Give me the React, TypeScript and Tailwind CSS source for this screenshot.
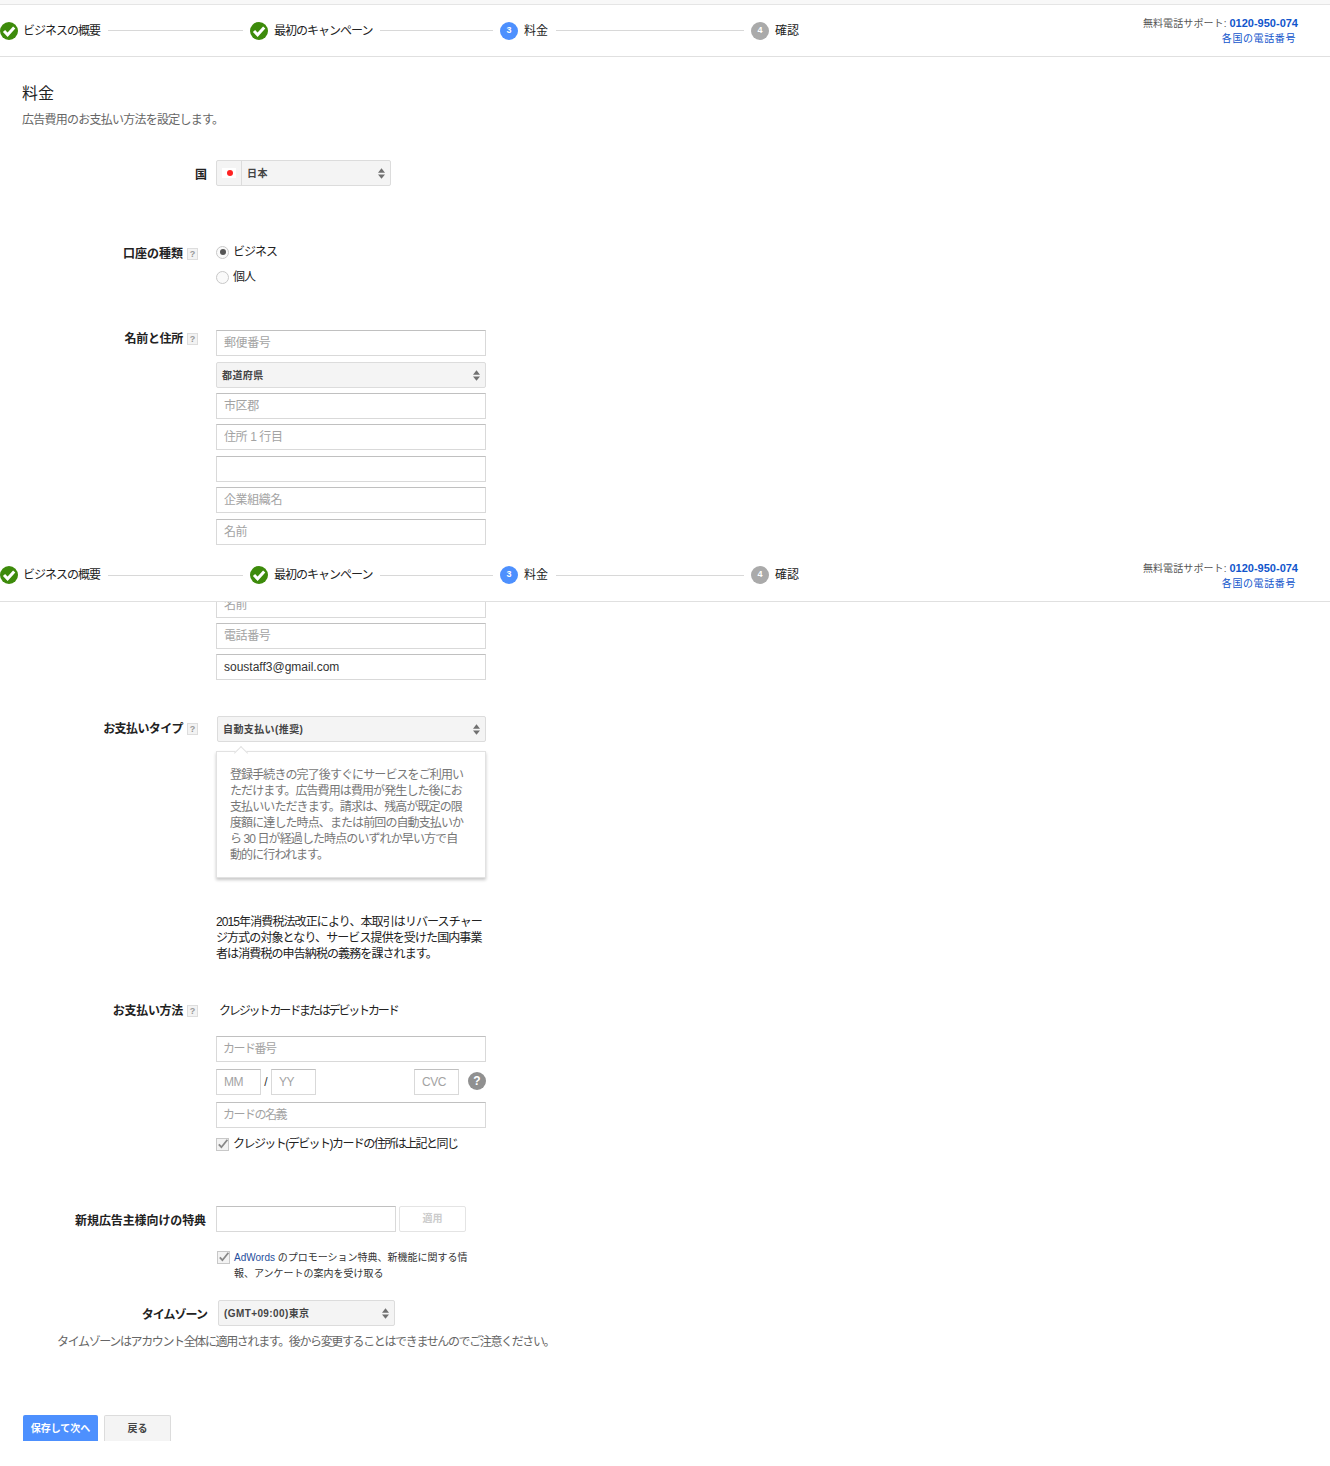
import React from 'react';

const inputClass =
  'block h-[26px] box-border border border-[#d9d9d9] border-t-[#c0c0c0] bg-white px-[7px] text-[12px] text-[#333] placeholder:text-[#a3a3a3] placeholder:tracking-[-0.4px] outline-none';

const StepCheck = () => (
  <svg width="18" height="18" viewBox="0 0 18 18" className="shrink-0">
    <circle cx="9" cy="9" r="9" fill="#3d8b0b" />
    <path d="M4 9 L7.6 12.8 L14.2 5.4" fill="none" stroke="#fff" strokeWidth="3" />
  </svg>
);

const StepNumber = ({ n, color }: { n: number; color: string }) => (
  <div className={`flex h-[18px] w-[18px] shrink-0 items-center justify-center rounded-full text-[9px] font-bold text-white ${color}`}>
    {n}
  </div>
);

const SelectArrows = () => (
  <svg width="7" height="11" viewBox="0 0 8 12" className="shrink-0">
    <path d="M4 0 L8 5 L0 5 Z M0 7 L8 7 L4 12 Z" fill="#707070" />
  </svg>
);

const Help = () => (
  <span className="ml-[4px] flex h-[12px] w-[11px] shrink-0 items-center justify-center border border-[#ddd] bg-[#f3f3f3] text-[9px] font-bold leading-none tracking-normal text-[#999]">
    ?
  </span>
);

const Label = ({ text, help, className }: { text: string; help?: boolean; className: string }) => (
  <div className={`flex w-[216px] shrink-0 items-center justify-end text-[12px] font-bold text-[#222] ${help ? 'pr-[18px]' : 'pr-[9px]'} ${className}`}>
    {text}
    {help && <Help />}
  </div>
);

const Select = ({ text, className, left }: { text: string; className: string; left?: React.ReactNode }) => (
  <div className={`flex h-[26px] box-border items-center rounded-[2px] border border-[#dcdcdc] bg-[#f4f4f4] pr-[5px] text-[10px] font-bold text-[#444] ${className}`}>
    {left}
    <span className="flex-1 pl-[5px] tracking-[0.4px]">{text}</span>
    <SelectArrows />
  </div>
);

const Checkbox = () => (
  <svg width="13" height="13" viewBox="0 0 13 13" className="shrink-0">
    <rect x="0.5" y="0.5" width="12" height="12" fill="#f3f3f3" stroke="#c8c8c8" />
    <path d="M2.8 6.4 L5.4 9.2 L11.4 1.8" fill="none" stroke="#888" strokeWidth="1.8" />
  </svg>
);

const Radio = ({ checked }: { checked?: boolean }) => (
  <span className="flex h-[13px] w-[13px] shrink-0 items-center justify-center rounded-full border border-[#c8c8c8] bg-[#fafafa]">
    {checked && <span className="h-[6px] w-[6px] rounded-full bg-[#555]" />}
  </span>
);

const Header = ({ topLine }: { topLine?: boolean }) => (
  <div className={`flex h-[53px] box-border items-center border-b border-[#e0e0e0] ${topLine ? 'border-t border-t-[#e5e5e5]' : ''}`}>
    <div className="flex w-[250px] items-center">
      <StepCheck />
      <span className="ml-[5px] text-[12px] tracking-[-1px] text-[#222]">ビジネスの概要</span>
      <div className="ml-[8px] mr-[7px] h-px flex-1 bg-[#d8d8d8]" />
    </div>
    <div className="flex w-[250px] items-center">
      <StepCheck />
      <span className="ml-[6px] text-[12px] tracking-[-1px] text-[#222]">最初のキャンペーン</span>
      <div className="ml-[8px] mr-[7px] h-px flex-1 bg-[#d8d8d8]" />
    </div>
    <div className="flex w-[251px] items-center">
      <StepNumber n={3} color="bg-[#4d90fe]" />
      <span className="ml-[6px] text-[12px] text-[#222]">料金</span>
      <div className="ml-[8px] mr-[7px] h-px flex-1 bg-[#d8d8d8]" />
    </div>
    <div className="flex items-center">
      <StepNumber n={4} color="bg-[#aaaaaa]" />
      <span className="ml-[6px] text-[12px] text-[#222]">確認</span>
    </div>
    <div className="ml-auto mr-[32px] text-right leading-[15px]">
      <div className="mt-px text-[10px] tracking-[0.1px] text-[#555]">
        無料電話サポート: <span className="text-[11px] font-bold tracking-normal text-[#1155cc]">0120-950-074</span>
      </div>
      <div className="mr-[2px] text-[10px] tracking-[0.6px] text-[#1155cc]">各国の電話番号</div>
    </div>
  </div>
);

export default function App() {
  return (
    <div className="relative h-[1466px] w-[1330px] overflow-hidden bg-white font-['Liberation_Sans','Noto_Sans_CJK_JP',sans-serif]">
      <div className="h-[4px] bg-[#f8f8f8]" />
      <Header topLine />

      <div className="pl-[22px] pt-[25px]">
        <h1 className="text-[16px] font-normal leading-[24px] text-[#222]">料金</h1>
        <p className="mt-[6px] text-[12px] leading-[16px] tracking-[-0.75px] text-[#666]">広告費用のお支払い方法を設定します。</p>
      </div>

      <div className="mt-[32px] flex h-[26px] items-start">
        <Label text="国" className="h-[30px]" />
        <Select
          text="日本"
          className="w-[175px]"
          left={
            <div className="flex h-full w-[25px] items-center justify-center border-r border-[#dcdcdc]">
              <div className="flex h-[10px] w-[14px] items-center justify-center bg-white">
                <div className="ml-px h-[6px] w-[6px] rounded-full bg-[#f22]" />
              </div>
            </div>
          }
        />
      </div>

      <div className="mt-[56px] flex items-start">
        <Label text="口座の種類" help className="h-[24px]" />
        <div className="flex flex-col gap-[5px] text-[12px] tracking-[-1px] text-[#222]">
          <label className="flex h-[20px] items-center gap-[4px]"><Radio checked />ビジネス</label>
          <label className="flex h-[20px] items-center gap-[4px]"><Radio />個人</label>
        </div>
      </div>

      <div className="mt-[43px] flex items-start">
        <Label text="名前と住所" help className="h-[18px] tracking-[-0.3px]" />
        <div>
          <input className={`${inputClass} w-[270px]`} placeholder="郵便番号" />
          <Select text="都道府県" className="mt-[6px] w-[270px]" />
          <input className={`${inputClass} mt-[5px] w-[270px]`} placeholder="市区郡" />
          <input className={`${inputClass} mt-[5px] w-[270px]`} placeholder="住所 1 行目" />
          <input className={`${inputClass} mt-[6px] w-[270px]`} />
          <input className={`${inputClass} mt-[5px] w-[270px]`} placeholder="企業組織名" />
          <input className={`${inputClass} mt-[6px] w-[270px]`} placeholder="名前" />
        </div>
      </div>

      <div className="mt-[4px]">
        <Header />
      </div>

      <div className="ml-[216px]">
        <div className="h-[16px] overflow-hidden">
          <input className={`${inputClass} -mt-[10px] w-[270px]`} placeholder="名前" />
        </div>
        <input className={`${inputClass} mt-[5px] w-[270px]`} placeholder="電話番号" />
        <input className={`${inputClass} mt-[5px] w-[270px]`} defaultValue="soustaff3@gmail.com" />
      </div>

      <div className="mt-[36px] flex items-start">
        <Label text="お支払いタイプ" help className="h-[26px] tracking-[-0.6px]" />
        <Select text="自動支払い(推奨)" className="ml-px w-[269px]" />
      </div>

      <div className="relative ml-[216px] mt-[9px] h-[127px] w-[270px] border border-[#e2e2e2] bg-white px-[13px] pt-[15px] text-[12px] leading-[16px] tracking-[-0.9px] text-[#777] shadow-[0_2px_3px_rgba(0,0,0,0.22)]">
        <div className="absolute -top-[4px] left-[19px] h-[10px] w-[10px] rotate-45 border-l border-t border-[#e2e2e2] bg-white" />
        <p className="relative">
          登録手続きの完了後すぐにサービスをご利用い<br />
          ただけます。広告費用は費用が発生した後にお<br />
          支払いいただきます。請求は、残高が既定の限<br />
          度額に達した時点、または前回の自動支払いか<br />
          ら 30 日が経過した時点のいずれか早い方で自<br />
          動的に行われます。
        </p>
      </div>

      <p className="ml-[216px] mt-[36px] text-[12px] leading-[16px] tracking-[-0.9px] text-[#222]">
        2015年消費税法改正により、本取引はリバースチャー<br />
        ジ方式の対象となり、サービス提供を受けた国内事業<br />
        者は消費税の申告納税の義務を課されます。
      </p>

      <div className="mt-[41px] flex h-[16px] items-start">
        <Label text="お支払い方法" help className="h-[16px] tracking-[-0.3px]" />
        <span className="ml-[3px] text-[12px] leading-[16px] tracking-[-2.15px] text-[#222]">クレジット カードまたはデビットカード</span>
      </div>

      <div className="ml-[216px]">
        <input className={`${inputClass} mt-[17px] w-[270px] pl-[6px] placeholder:tracking-[-1.5px]`} placeholder="カード番号" />
        <div className="mt-[7px] flex w-[270px] items-center">
          <input className={`${inputClass} w-[45px]`} placeholder="MM" />
          <span className="w-[10px] text-center text-[12px] text-[#333]">/</span>
          <input className={`${inputClass} w-[45px]`} placeholder="YY" />
          <input className={`${inputClass} ml-[98px] w-[45px]`} placeholder="CVC" />
          <span className="-mt-[3px] ml-[9px] flex h-[18px] w-[18px] items-center justify-center rounded-full bg-[#909090] text-[12px] font-bold text-white">?</span>
        </div>
        <input className={`${inputClass} mt-[7px] w-[270px] pl-[6px] placeholder:tracking-[-1.5px]`} placeholder="カードの名義" />
        <label className="mt-[8px] flex h-[16px] items-center gap-[4px] text-[12px] tracking-[-1.55px] text-[#222]">
          <Checkbox />
          クレジット(デビット)カードの住所は上記と同じ
        </label>
      </div>

      <div className="mt-[54px] flex h-[26px] items-start">
        <Label text="新規広告主様向けの特典" className="h-[30px] pr-[10px] tracking-[-0.1px]" />
        <input className={`${inputClass} w-[180px]`} />
        <button className="ml-[3px] h-[26px] w-[67px] rounded-[2px] border border-[#e4e4e4] bg-white pb-[2px] text-[10px] font-bold text-[#ccc]">適用</button>
      </div>

      <div className="ml-[217px] mt-[19px] flex w-[260px] gap-[4px] text-[10px] leading-[15.5px] text-[#333]">
        <Checkbox />
        <p className="-mt-px">
          <span className="text-[#1f4e9c]">AdWords</span> のプロモーション特典、新機能に関する情<br />
          報、アンケートの案内を受け取る
        </p>
      </div>

      <div className="mt-[19px] flex h-[26px] items-start">
        <Label text="タイムゾーン" className="h-[30px] tracking-[-1px]" />
        <Select text="(GMT+09:00)東京" className="ml-[2px] w-[177px]" />
      </div>

      <p className="ml-[57px] mt-[8px] text-[12px] leading-[16px] tracking-[-1.37px] text-[#666]">
        タイムゾーンはアカウント全体に適用されます。後から変更することはできませんのでご注意ください。
      </p>

      <div className="ml-[23px] mt-[65px] flex gap-[6px]">
        <button className="h-[26px] w-[75px] rounded-t-[2px] bg-[#4d90fe] text-[10px] font-bold text-white">保存して次へ</button>
        <button className="h-[26px] w-[67px] rounded-t-[2px] border-x border-t border-[#dcdcdc] bg-[#f4f4f4] text-[10px] font-bold text-[#444]">戻る</button>
      </div>
    </div>
  );
}
